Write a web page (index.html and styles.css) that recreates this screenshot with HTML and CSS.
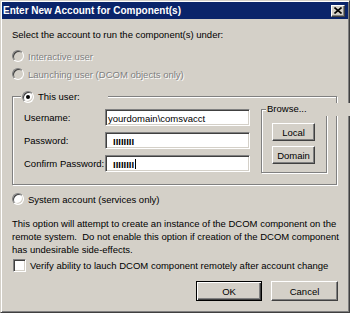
FILE: index.html
```html
<!DOCTYPE html>
<html>
  <head>
    <meta charset="utf-8" />
    <title>Enter New Account for Component(s)</title>
    <link rel="stylesheet" href="styles.css">
  </head>
  <body>
    <div class="window">
      <div class="titlebar">
        <span class="title">Enter New Account for Component(s)</span>
        <button class="close-btn" title="Close">
          <svg width="8" height="7" viewBox="0 0 8 7"><path d="M0.5 0.5L7.5 6.5M7.5 0.5L0.5 6.5" stroke="#000" stroke-width="1.6" fill="none"/></svg>
        </button>
      </div>

      <div class="content">
        <div class="intro">Select the account to run the component(s) under:</div>

        <div class="option disabled"><span class="radio"></span>Interactive user</div>
        <div class="option disabled"><span class="radio"></span>Launching user (DCOM objects only)</div>

        <fieldset class="group user-group">
          <legend class="option"><span class="radio checked"></span>This user:</legend>
          <div class="user-body">
            <div class="fields">
              <div class="field-row">
                <label>Username:</label>
                <div class="edit">yourdomain\comsvacct</div>
              </div>
              <div class="field-row">
                <label>Password:</label>
                <div class="edit secret">IIIIIIII</div>
              </div>
              <div class="field-row">
                <label>Confirm Password:</label>
                <div class="edit secret">IIIIIIII<span class="caret"></span></div>
              </div>
            </div>
            <fieldset class="group browse-group">
              <legend>Browse...</legend>
              <button class="btn">Local</button>
              <button class="btn">Domain</button>
            </fieldset>
          </div>
        </fieldset>

        <div class="option system"><span class="radio"></span>System account (services only)</div>

        <p class="note">This option will attempt to create an instance of the DCOM component on the<br>remote system.&nbsp; Do not enable this option if creation of the DCOM component<br>has undesirable side-effects.</p>

        <div class="option check-row"><span class="checkbox"></span>Verify ability to lauch DCOM component remotely after account change</div>

        <div class="actions">
          <button class="btn default">OK</button>
          <button class="btn">Cancel</button>
        </div>
      </div>
    </div>
  </body>
</html>
```

FILE: styles.css
```css
* {
  margin: 0;
  padding: 0;
  box-sizing: border-box;
}

body {
  background: #d4d0c8;
  font-family: "Liberation Sans", Arial, sans-serif;
  font-size: 9.5px;
  line-height: 13px;
  color: #000;
}

/* window frame */
.window {
  width: 350px;
  height: 313px;
  border: 1px solid;
  border-color: #d4d0c8 #404040 #404040 #d4d0c8;
  box-shadow: inset 1px 1px #fff, inset -1px -1px #808080;
  padding: 1px;
  display: flex;
  flex-direction: column;
}

.titlebar {
  height: 17px;
  background: #0a246a;
  color: #fff;
  font-size: 10px;
  font-weight: bold;
  padding: 0 3px 0 1px;
  display: flex;
  align-items: center;
  justify-content: space-between;
  flex-shrink: 0;
}

.close-btn {
  width: 14px;
  height: 12px;
  background: #d4d0c8;
  border: 1px solid;
  border-color: #fff #404040 #404040 #fff;
  box-shadow: inset -1px -1px #808080;
  display: flex;
  align-items: center;
  justify-content: center;
}

.content {
  flex: 1;
  padding: 9px 11px 0 10px;
  display: flex;
  flex-direction: column;
}

.intro {
  height: 13px;
}

/* radio / checkbox rows */
.option {
  display: flex;
  align-items: center;
  height: 18px;
  white-space: nowrap;
}

.intro + .option {
  margin-top: 6px;
}

.option.disabled {
  color: #808080;
  text-shadow: 1px 1px #fff;
}

.radio {
  width: 12px;
  height: 12px;
  margin-right: 4px;
  border-radius: 50%;
  border: 1px solid;
  border-color: #808080 #fff #fff #808080;
  box-shadow: inset 1px 1px #404040, inset -1px -1px #d4d0c8;
  background: #fff;
  position: relative;
  flex-shrink: 0;
}

.disabled .radio {
  background: #d4d0c8;
}

.radio.checked::after {
  content: "";
  position: absolute;
  left: 3px;
  top: 3px;
  width: 4px;
  height: 4px;
  border-radius: 50%;
  background: #000;
}

.checkbox {
  width: 13px;
  height: 13px;
  margin: 0 4px 0 1px;
  border: 1px solid;
  border-color: #808080 #fff #fff #808080;
  box-shadow: inset 1px 1px #404040, inset -1px -1px #d4d0c8;
  background: #fff;
  flex-shrink: 0;
}

/* group boxes */
.group {
  border: 1px solid #808080;
  box-shadow: 1px 1px #fff, inset 1px 1px #fff;
  min-width: 0;
}

.group legend {
  background: #d4d0c8;
}

.user-group {
  margin-top: 7px;
  width: 325px;
  padding: 0 9px 11px 11px;
}

.user-group legend {
  height: 13px;
  width: 87px;
  margin-left: -3px;
  padding-left: 1px;
}

.user-body {
  display: flex;
  gap: 11px;
}

.fields {
  margin-top: 6px;
  display: flex;
  flex-direction: column;
  gap: 6px;
}

.field-row {
  display: flex;
  align-items: center;
  height: 17px;
}

.field-row label {
  width: 81px;
}

.edit {
  width: 145px;
  height: 17px;
  background: #fff;
  border: 1px solid;
  border-color: #808080 #fff #fff #808080;
  box-shadow: inset 1px 1px #404040, inset -1px -1px #d4d0c8;
  padding: 1px 2px 0 2px;
  white-space: nowrap;
  overflow: hidden;
  display: flex;
  align-items: center;
}

.edit.secret {
  padding-left: 7px;
  font-weight: bold;
}

.caret {
  display: inline-block;
  width: 1px;
  height: 10px;
  background: #000;
  margin-left: 1px;
}

.browse-group {
  width: 66px;
  padding: 7px 11px 8px 10px;
  display: flex;
  flex-direction: column;
  gap: 5px;
}

.browse-group legend {
  line-height: 12px;
  margin-left: -6px;
  padding: 0 1px;
}

/* push buttons */
.btn {
  font-family: inherit;
  font-size: inherit;
  color: #000;
  background: #d4d0c8;
  height: 18px;
  border: 1px solid;
  border-color: #fff #404040 #404040 #fff;
  box-shadow: inset -1px -1px #808080;
}

.browse-group .btn {
  width: 43px;
}

.system {
  margin-top: 5px;
}

.note {
  margin-top: 9px;
  white-space: nowrap;
}

.check-row {
  margin-top: 1px;
  height: 16px;
}

.actions {
  margin-top: 8px;
  margin-right: -1px;
  display: flex;
  justify-content: flex-end;
  gap: 9px;
}

.actions .btn {
  width: 67px;
  height: 20px;
}

.actions .btn.default {
  width: 66px;
  border: 1px solid #000;
  box-shadow: inset 1px 1px #fff, inset -1px -1px #404040, inset -2px -2px #808080;
}
```
